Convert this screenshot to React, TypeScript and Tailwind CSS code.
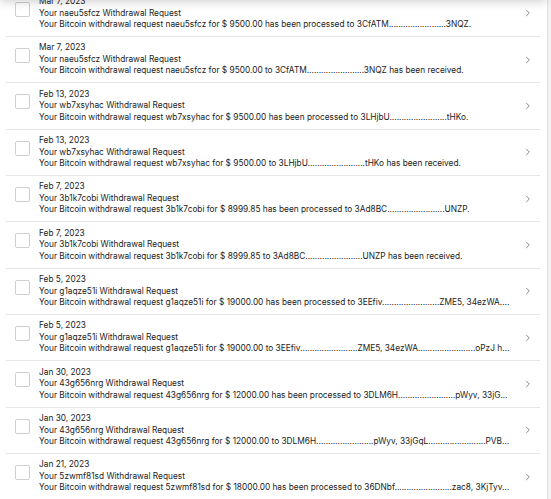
import React from "react";

const D = "........................";

type Row = { date: string; id: string; body: string };

const rows: Row[] = [
  { date: "Mar 7, 2023", id: "naeu5sfcz", body: `Your Bitcoin withdrawal request naeu5sfcz for $ 9500.00 has been processed to 3CfATM${D}3NQZ.` },
  { date: "Mar 7, 2023", id: "naeu5sfcz", body: `Your Bitcoin withdrawal request naeu5sfcz for $ 9500.00 to 3CfATM${D}3NQZ has been received.` },
  { date: "Feb 13, 2023", id: "wb7xsyhac", body: `Your Bitcoin withdrawal request wb7xsyhac for $ 9500.00 has been processed to 3LHjbU${D}tHKo.` },
  { date: "Feb 13, 2023", id: "wb7xsyhac", body: `Your Bitcoin withdrawal request wb7xsyhac for $ 9500.00 to 3LHjbU${D}tHKo has been received.` },
  { date: "Feb 7, 2023", id: "3b1k7cobi", body: `Your Bitcoin withdrawal request 3b1k7cobi for $ 8999.85 has been processed to 3Ad8BC${D}UNZP.` },
  { date: "Feb 7, 2023", id: "3b1k7cobi", body: `Your Bitcoin withdrawal request 3b1k7cobi for $ 8999.85 to 3Ad8BC${D}UNZP has been received.` },
  { date: "Feb 5, 2023", id: "g1aqze51i", body: `Your Bitcoin withdrawal request g1aqze51i for $ 19000.00 has been processed to 3EEfiv${D}ZME5, 34ezWA${D}oPzJ.` },
  { date: "Feb 5, 2023", id: "g1aqze51i", body: `Your Bitcoin withdrawal request g1aqze51i for $ 19000.00 to 3EEfiv${D}ZME5, 34ezWA${D}oPzJ has been received.` },
  { date: "Jan 30, 2023", id: "43g656nrg", body: `Your Bitcoin withdrawal request 43g656nrg for $ 12000.00 has been processed to 3DLM6H${D}pWyv, 33jGqL${D}PVBC.` },
  { date: "Jan 30, 2023", id: "43g656nrg", body: `Your Bitcoin withdrawal request 43g656nrg for $ 12000.00 to 3DLM6H${D}pWyv, 33jGqL${D}PVBC has been received.` },
  { date: "Jan 21, 2023", id: "5zwmf81sd", body: `Your Bitcoin withdrawal request 5zwmf81sd for $ 18000.00 has been processed to 36DNbf${D}zac8, 3KjTyv${D}Q9rX.` },
  { date: "Jan 21, 2023", id: "5zwmf81sd", body: `Your Bitcoin withdrawal request 5zwmf81sd for $ 18000.00 to 36DNbf${D}zac8, 3KjTyv${D}Q9rX has been received.` },
];

function Chevron() {
  return (
    <svg width="6" height="8" viewBox="0 0 6 8" fill="none" className="shrink-0">
      <path d="M1.5 1.2 L4.3 4 L1.5 6.8" stroke="#8a8a8a" strokeWidth="1" strokeLinecap="round" strokeLinejoin="round" />
    </svg>
  );
}

export default function App() {
  return (
    <div
      className="relative w-[551px] h-[499px] overflow-hidden bg-white flex text-[#222222]"
      style={{ fontFamily: "Inter, 'Noto Sans', sans-serif" }}
    >
      <div className="absolute left-0 right-[4px] top-[-20px] h-[20px] bg-white shadow-[0_2px_10px_rgba(0,0,0,0.18)] z-10" />
      <div className="flex-1 min-w-0 pl-[6px] pr-[7px]">
        <div className="mt-[-9.33px]">
          {rows.map((r, i) => (
            <div key={i} className="flex items-center border-b border-[#e6e6e6] h-[46.33px]">
              <div className="self-start mt-[11px] ml-[9px] w-[15px] h-[15px] shrink-0 rounded-[2px] border border-[#cfcfcf] bg-white" />
              <div className="ml-[9px] min-w-0 w-[471px] text-[8.3px] leading-[11.5px]">
                <div className="truncate">{r.date}</div>
                <div className="truncate">Your {r.id} Withdrawal Request</div>
                <div className="truncate">{r.body}</div>
              </div>
              <div className="ml-auto mr-[9px] flex items-center">
                <Chevron />
              </div>
            </div>
          ))}
        </div>
      </div>
      <div className="w-[4px] shrink-0 bg-[#f3f3f3] border-l border-[#e2e2e2]" />
    </div>
  );
}
